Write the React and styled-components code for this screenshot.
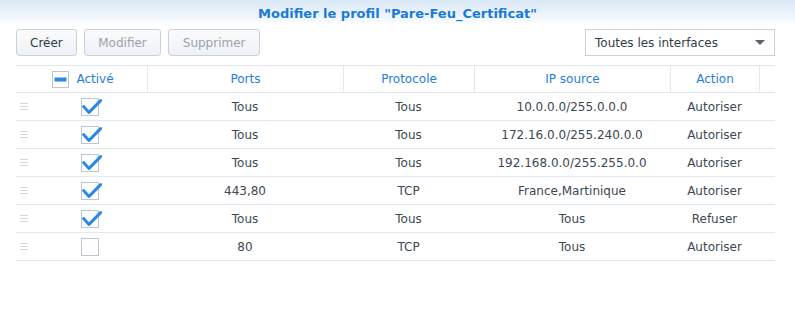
import React from 'react';
import styled, { createGlobalStyle } from 'styled-components';

const GlobalStyle = createGlobalStyle`
    body {
        margin: 0;
        background: #fff;
        font-family: "DejaVu Sans", Verdana, sans-serif;
    }
`;

const rules = [
    { on: true, ports: 'Tous', proto: 'Tous', ip: '10.0.0.0/255.0.0.0', action: 'Autoriser' },
    { on: true, ports: 'Tous', proto: 'Tous', ip: '172.16.0.0/255.240.0.0', action: 'Autoriser' },
    { on: true, ports: 'Tous', proto: 'Tous', ip: '192.168.0.0/255.255.0.0', action: 'Autoriser' },
    { on: true, ports: '443,80', proto: 'TCP', ip: 'France,Martinique', action: 'Autoriser' },
    { on: true, ports: 'Tous', proto: 'Tous', ip: 'Tous', action: 'Refuser' },
    { on: false, ports: '80', proto: 'TCP', ip: 'Tous', action: 'Autoriser' },
];

const Window = styled.div`
    width: 795px;
    height: 311px;
    background: #fff;
    overflow: hidden;
`;

const TitleBar = styled.div`
    height: 26px;
    display: flex;
    align-items: center;
    justify-content: center;
    background: linear-gradient(to bottom, #d9e8f6 0%, #eef5fb 60%, #ffffff 100%);
    color: #1a7ad8;
    font-size: 13px;
    font-weight: bold;
`;

const Toolbar = styled.div`
    display: flex;
    align-items: center;
    gap: 7px;
    padding: 3px 20px 0 16px;
    height: 27px;
`;

const Button = styled.button`
    height: 27px;
    padding: 0 ${(p) => p.$pad}px;
    border: 1px solid #c9d1da;
    border-radius: 3px;
    background: linear-gradient(to bottom, #fafbfc, #eef1f4);
    color: ${(p) => (p.disabled ? '#9aa3ad' : '#323c46')};
    font-family: inherit;
    font-size: 12px;
`;

const Spacer = styled.div`
    flex: 1;
`;

const Select = styled.div`
    width: 190px;
    height: 27px;
    box-sizing: border-box;
    border: 1px solid #c9d1da;
    display: flex;
    align-items: center;
    justify-content: space-between;
    padding: 0 9px 0 9px;
    color: #323c46;
    font-size: 12px;
`;

const Table = styled.div`
    margin: 9px 20px 0 16px;
    border-top: 1px solid #e2e8ee;
`;

const Row = styled.div`
    display: grid;
    grid-template-columns: 131px 196px 131px 196px 89px 16px;
    height: ${(p) => (p.$head ? 26 : 27)}px;
    border-bottom: 1px solid #e2e8ee;
`;

const HeadCell = styled.div`
    display: flex;
    align-items: center;
    justify-content: center;
    gap: 7px;
    padding-left: ${(p) => (p.$first ? 3 : 0)}px;
    color: #1f7edc;
    font-size: 12px;
    border-left: ${(p) => (p.$first ? 'none' : '1px solid #e2e8ee')};
`;

const Cell = styled.div`
    display: flex;
    align-items: center;
    justify-content: center;
    color: #3c4853;
    font-size: 12px;
`;

const CheckCell = styled.div`
    display: flex;
    align-items: center;
    padding-left: 4px;
`;

const Handle = styled.div`
    width: 8px;
    display: flex;
    flex-direction: column;
    gap: 2px;
    margin-right: 53px;

    span {
        height: 1px;
        background: #d4d9de;
    }
`;

const Box = styled.svg`
    overflow: visible;
    display: block;
`;

const Check = ({ on }) => (
    <Box width="18" height="18" viewBox="0 0 18 18">
        <rect x="0.5" y="0.5" width="17" height="17" fill="#fff" stroke="#bcc7d2" />
        {on && (
            <path
                d="M2.6 8.6 L8 14.4 L19.6 2.6"
                fill="none"
                stroke="#2a89e6"
                strokeWidth="3"
                strokeLinecap="round"
                strokeLinejoin="round"
            />
        )}
    </Box>
);

const HeadCheck = () => (
    <Box width="17" height="17" viewBox="0 0 17 17">
        <rect x="0.5" y="0.5" width="16" height="16" fill="#fff" stroke="#bcc7d2" />
        <rect x="2.5" y="6.5" width="12" height="4" fill="#2a89e6" />
    </Box>
);

const App = () => (
    <Window>
        <GlobalStyle />
        <TitleBar>Modifier le profil "Pare-Feu_Certificat"</TitleBar>
        <Toolbar>
            <Button $pad={13}>Créer</Button>
            <Button $pad={13.5} disabled>Modifier</Button>
            <Button $pad={13.5} disabled>Supprimer</Button>
            <Spacer />
            <Select>
                <span>Toutes les interfaces</span>
                <svg width="10" height="5" viewBox="0 0 10 5">
                    <path d="M0 0 H10 L5 5 Z" fill="#56626d" />
                </svg>
            </Select>
        </Toolbar>
        <Table>
            <Row $head>
                <HeadCell $first>
                    <HeadCheck />
                    Activé
                </HeadCell>
                <HeadCell>Ports</HeadCell>
                <HeadCell>Protocole</HeadCell>
                <HeadCell>IP source</HeadCell>
                <HeadCell>Action</HeadCell>
                <HeadCell />
            </Row>
            {rules.map((r, i) => (
                <Row key={i}>
                    <CheckCell>
                        <Handle>
                            <span />
                            <span />
                            <span />
                        </Handle>
                        <Check on={r.on} />
                    </CheckCell>
                    <Cell>{r.ports}</Cell>
                    <Cell>{r.proto}</Cell>
                    <Cell>{r.ip}</Cell>
                    <Cell>{r.action}</Cell>
                    <Cell />
                </Row>
            ))}
        </Table>
    </Window>
);

export default App;
